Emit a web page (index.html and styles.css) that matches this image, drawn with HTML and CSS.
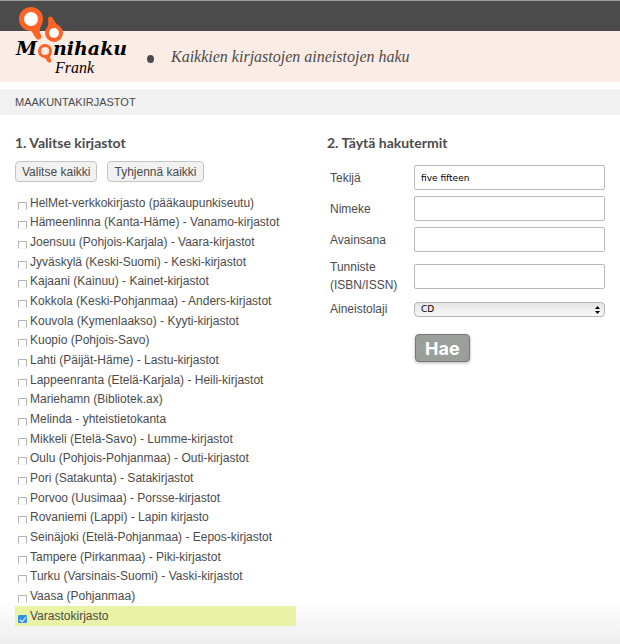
FILE: index.html
```html
<!DOCTYPE html>
<html lang="fi">
  <head>
    <meta charset="utf-8">
    <title>Monihaku Frank</title>
    <link rel="stylesheet" href="styles.css">
  </head>
  <body>
    <header>
      <div class="topbar"></div>
      <div class="banner">
        <a class="logo" href="#" aria-label="Monihaku Frank">
          <svg width="120" height="74" viewBox="0 0 120 74">
            <g fill="#ff6326">
              <path d="M7 27 Q17 29 20 37 Q23 42 26 38 Q27 36 25 33 Q24 29 27 24 Z" />
              <path d="M33 18 Q35 15 38 18 Q39 22 45 27 L32 28 Q34 24 33 18 Z" />
              <path d="M25 55 Q31 58 32 61 Q34 64 36 62 Q37 60 35 58 L36 53 Z" />
            </g>
            <g fill="#fff" stroke="#ff6326">
              <circle cx="16" cy="19" r="9.5" stroke-width="5" />
              <circle cx="39" cy="33" r="7" stroke-width="4" />
              <circle cx="30" cy="51" r="5.5" stroke-width="3" fill="#fbede5" />
            </g>
            <text class="logo-name" x="1" y="55">M</text>
            <text class="logo-name" x="38" y="55">nihaku</text>
            <text class="logo-sub" x="40" y="73">Frank</text>
          </svg>
        </a>
        <span class="dot"></span>
        <p class="slogan">Kaikkien kirjastojen aineistojen haku</p>
      </div>
    </header>
    <nav>
      <a href="#">MAAKUNTAKIRJASTOT</a>
    </nav>
    <form>
      <section class="libraries">
        <h2>1. Valitse kirjastot</h2>
        <div class="buttons">
          <button type="button">Valitse kaikki</button>
          <button type="button">Tyhjennä kaikki</button>
        </div>
        <ul>
          <li><label><input type="checkbox">HelMet-verkkokirjasto (pääkaupunkiseutu)</label></li>
          <li><label><input type="checkbox">Hämeenlinna (Kanta-Häme) - Vanamo-kirjastot</label></li>
          <li><label><input type="checkbox">Joensuu (Pohjois-Karjala) - Vaara-kirjastot</label></li>
          <li><label><input type="checkbox">Jyväskylä (Keski-Suomi) - Keski-kirjastot</label></li>
          <li><label><input type="checkbox">Kajaani (Kainuu) - Kainet-kirjastot</label></li>
          <li><label><input type="checkbox">Kokkola (Keski-Pohjanmaa) - Anders-kirjastot</label></li>
          <li><label><input type="checkbox">Kouvola (Kymenlaakso) - Kyyti-kirjastot</label></li>
          <li><label><input type="checkbox">Kuopio (Pohjois-Savo)</label></li>
          <li><label><input type="checkbox">Lahti (Päijät-Häme) - Lastu-kirjastot</label></li>
          <li><label><input type="checkbox">Lappeenranta (Etelä-Karjala) - Heili-kirjastot</label></li>
          <li><label><input type="checkbox">Mariehamn (Bibliotek.ax)</label></li>
          <li><label><input type="checkbox">Melinda - yhteistietokanta</label></li>
          <li><label><input type="checkbox">Mikkeli (Etelä-Savo) - Lumme-kirjastot</label></li>
          <li><label><input type="checkbox">Oulu (Pohjois-Pohjanmaa) - Outi-kirjastot</label></li>
          <li><label><input type="checkbox">Pori (Satakunta) - Satakirjastot</label></li>
          <li><label><input type="checkbox">Porvoo (Uusimaa) - Porsse-kirjastot</label></li>
          <li><label><input type="checkbox">Rovaniemi (Lappi) - Lapin kirjasto</label></li>
          <li><label><input type="checkbox">Seinäjoki (Etelä-Pohjanmaa) - Eepos-kirjastot</label></li>
          <li><label><input type="checkbox">Tampere (Pirkanmaa) - Piki-kirjastot</label></li>
          <li><label><input type="checkbox">Turku (Varsinais-Suomi) - Vaski-kirjastot</label></li>
          <li><label><input type="checkbox">Vaasa (Pohjanmaa)</label></li>
          <li class="selected"><label><input type="checkbox" checked>Varastokirjasto</label></li>
        </ul>
      </section>
      <section class="terms">
        <h2>2. Täytä hakutermit</h2>
        <div class="fields">
          <label for="author">Tekijä</label>
          <input type="text" id="author" name="author" value="five fifteen">
          <label for="title">Nimeke</label>
          <input type="text" id="title" name="title">
          <label for="keyword">Avainsana</label>
          <input type="text" id="keyword" name="keyword">
          <label for="isbn">Tunniste (ISBN/ISSN)</label>
          <input type="text" id="isbn" name="isbn">
          <label for="type">Aineistolaji</label>
          <div class="select">
            <select id="type" name="type">
              <option>CD</option>
            </select>
            <svg width="5" height="8" viewBox="0 0 5 8">
              <path d="M0 3 L2.5 0 L5 3 Z M0 5 L2.5 8 L5 5 Z" />
            </svg>
          </div>
          <button class="search" type="button">Hae</button>
        </div>
      </section>
    </form>
  </body>
</html>
```

FILE: styles.css
```css
* {
  box-sizing: border-box;
}

body {
  margin: 0;
  min-height: 100vh;
  font-family: "Liberation Sans", Arial, sans-serif;
  font-size: 12px;
  color: #4b4b4b;
  background: #fff linear-gradient(to top, #eeeeee, #ffffff 44px) no-repeat;
}

.topbar {
  height: 31px;
  background: #4b4b4b;
  border-top: 1px solid #9a9f9b;
}

.banner {
  position: relative;
  display: flex;
  align-items: center;
  height: 51px;
  padding-left: 147px;
  background: #fbede5;
}

.logo {
  position: absolute;
  left: 15px;
  bottom: 8px;
}

.logo svg {
  display: block;
  overflow: visible;
}

.logo text {
  font-style: italic;
  fill: #000;
}

.logo .logo-name {
  font-family: "DejaVu Serif", Georgia, serif;
  font-size: 19px;
  font-weight: bold;
}

.logo .logo-sub {
  font-family: "Liberation Serif", Georgia, serif;
  font-size: 16px;
}

.dot {
  width: 7px;
  height: 8px;
  margin-top: 4px;
  margin-right: 17px;
  border-radius: 50%;
  background: #4b4b4b;
}

.slogan {
  margin: 0;
  font-family: "Liberation Serif", Georgia, serif;
  font-size: 16px;
  font-style: italic;
}

nav {
  margin-top: 7px;
  padding: 1px 15px 0;
  line-height: 25px;
  font-size: 11px;
  background: #f1f1f1;
}

nav a {
  color: #4b4b4b;
  text-decoration: none;
}

form {
  display: grid;
  grid-template-columns: 281fr 278fr;
  gap: 31px;
  padding: 18px 15px;
}

h2 {
  margin: 0 0 8px;
  font-family: Lato, sans-serif;
  font-size: 14px;
  line-height: 20px;
}

.buttons {
  display: flex;
  gap: 10px;
  margin-bottom: 11px;
}

.buttons button {
  height: 21px;
  padding: 0 6px;
  font: inherit;
  color: #4b4b4b;
  background: #f1f1f1;
  border: 1px solid #c4c4c4;
  border-radius: 4px;
}

ul {
  margin: 0;
  padding: 0;
  list-style: none;
}

li {
  height: 20px;
  line-height: 20px;
}

li:nth-child(3n + 1) {
  height: 19px;
}

li.selected {
  height: 20px;
  background: #e9f2a5;
}

li label {
  display: flex;
}

input[type="checkbox"] {
  appearance: none;
  width: 9px;
  height: 8px;
  margin: 9px 3px 0;
  border: 1px solid #b4b4b4;
  border-bottom-color: #f4f4f4;
  border-radius: 1px;
  background: #fff;
}

input[type="checkbox"]:checked {
  border-color: #2f8fee;
  background: #2f8fee;
}

input[type="checkbox"]:checked::after {
  content: "";
  display: block;
  width: 3px;
  height: 6px;
  margin: -1px 0 0 2px;
  border: solid #fff;
  border-width: 0 1px 1px 0;
  transform: rotate(40deg);
}

.fields {
  display: grid;
  grid-template-columns: 84px 1fr;
  align-items: center;
  row-gap: 6px;
  padding-top: 4px;
  padding-left: 3px;
}

.fields label {
  line-height: 18px;
}

input[type="text"] {
  width: 100%;
  height: 25px;
  padding: 0 6px;
  font-family: "DejaVu Sans", Verdana, sans-serif;
  font-size: 9px;
  color: #000;
  border: 1px solid #b9b9b9;
  border-radius: 2px;
  background: #fff;
}

.select {
  position: relative;
  display: flex;
}

.select svg {
  position: absolute;
  top: 4px;
  right: 5px;
  pointer-events: none;
}

select {
  appearance: none;
  width: 100%;
  height: 15px;
  padding: 0 6px;
  font-family: "DejaVu Sans", Verdana, sans-serif;
  font-size: 9px;
  color: #000;
  border: 1px solid #b4b4b4;
  border-radius: 4px;
  background: linear-gradient(#e4e4e4, #f8f8f8);
}

.search {
  grid-column: 2;
  justify-self: start;
  height: 28px;
  margin-top: 10px;
  margin-left: 1px;
  padding: 0 9px;
  font-family: Inter, sans-serif;
  font-size: 18px;
  font-weight: bold;
  color: #fff;
  background: #9a9f9b;
  border: 1px solid #777;
  border-radius: 4px;
  box-shadow: 0 1px 3px rgba(0, 0, 0, 0.3);
}
```
